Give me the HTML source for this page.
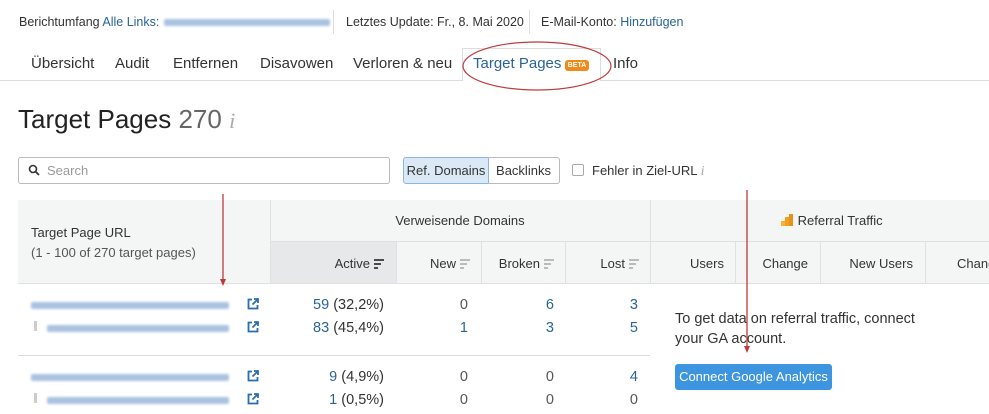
<!DOCTYPE html>
<html><head><meta charset="utf-8"><style>
*{box-sizing:border-box;margin:0;padding:0}
body{width:989px;height:414px;overflow:hidden;background:#fff;font-family:"Liberation Sans",sans-serif;color:#333;position:relative}
.a{position:absolute;white-space:nowrap}
.blue{color:#2a6496}
.blur{position:absolute;height:7px;background:#a9c2e0;border-radius:2px;filter:blur(1.2px)}
.vl{position:absolute;width:1px;background:#e0e0e0}
.num{position:absolute;font-size:14.5px;text-align:right}
.sort{display:inline-block;width:10px;height:10px;vertical-align:-1px;margin-left:4px;background:linear-gradient(#bbb,#bbb) 0 0/10px 2px no-repeat,linear-gradient(#bbb,#bbb) 0 4px/7px 2px no-repeat,linear-gradient(#bbb,#bbb) 0 8px/4px 2px no-repeat}
.ext{position:absolute}
</style></head><body>
<div class="a" style="left:19px;top:15px;font-size:12.5px">Berichtumfang <span class="blue">Alle Links:</span></div>
<div class="blur" style="left:164px;top:19px;width:166px"></div>
<div class="a" style="left:333px;top:10px;width:1px;height:24px;background:#ddd"></div>
<div class="a" style="left:346px;top:15px;font-size:12.5px">Letztes Update: Fr., 8. Mai 2020</div>
<div class="a" style="left:529px;top:10px;width:1px;height:24px;background:#ddd"></div>
<div class="a" style="left:541px;top:15px;font-size:12.5px">E-Mail-Konto: <span class="blue">Hinzufügen</span></div>

<div class="a" style="left:0;top:80px;width:989px;height:1px;background:#ddd"></div>
<div class="a" style="left:462px;top:48px;width:139px;height:33px;border:1px solid #ddd;border-bottom:none;background:#fff"></div>
<div class="a" style="left:31px;top:55px;font-size:15px">Übersicht</div>
<div class="a" style="left:115px;top:55px;font-size:15px">Audit</div>
<div class="a" style="left:173px;top:55px;font-size:15px">Entfernen</div>
<div class="a" style="left:260px;top:55px;font-size:15px">Disavowen</div>
<div class="a" style="left:353px;top:55px;font-size:15px">Verloren &amp; neu</div>
<div class="a" style="left:473px;top:55px;font-size:15px;color:#2a6496">Target Pages</div>
<div class="a" style="left:565px;top:60px;width:24px;height:11px;background:#f08a1a;border-radius:3px;color:#fff;font-size:7px;text-align:center;line-height:11px;font-weight:bold">BETA</div>
<div class="a" style="left:613px;top:55px;font-size:15px">Info</div>

<div class="a" style="left:18px;top:104px;font-size:26px;color:#222">Target Pages <span style="color:#666">270</span> <span style="color:#aaa;font-style:italic;font-family:'Liberation Serif',serif;font-size:22px">i</span></div>

<div class="a" style="left:18px;top:157px;width:372px;height:27px;border:1px solid #bbb;border-radius:3px"></div>
<svg class="a" style="left:28px;top:164px" width="12" height="12" viewBox="0 0 12 12"><circle cx="5" cy="5" r="3.5" fill="none" stroke="#333" stroke-width="1.6"/><path d="M7.5 7.5L11 11" stroke="#333" stroke-width="1.8"/></svg>
<div class="a" style="left:47px;top:163px;font-size:13px;color:#999">Search</div>
<div class="a" style="left:403px;top:157px;width:86px;height:27px;border:1px solid #8ab6e0;background:#dbe9f6;border-radius:3px 0 0 3px;font-size:13px;text-align:center;line-height:25px">Ref. Domains</div>
<div class="a" style="left:488px;top:157px;width:72px;height:27px;border:1px solid #bbb;border-left:none;border-radius:0 3px 3px 0;font-size:13px;text-align:center;line-height:25px">Backlinks</div>
<div class="a" style="left:572px;top:164px;width:12px;height:12px;border:1px solid #aaa;border-radius:2px"></div>
<div class="a" style="left:592px;top:163px;font-size:13px">Fehler in Ziel-URL <span style="color:#aaa;font-style:italic;font-family:'Liberation Serif',serif;font-size:14px">i</span></div>

<div class="a" style="left:18px;top:200px;width:971px;height:83px;background:#f4f5f5"></div>
<div class="a" style="left:270px;top:241px;width:126px;height:42px;background:#e6e8e9"></div>
<div class="vl" style="left:270px;top:200px;height:83px"></div>
<div class="vl" style="left:650px;top:200px;height:83px"></div>
<div class="a" style="left:270px;top:241px;width:719px;height:1px;background:#e0e0e0"></div>
<div class="vl" style="left:396px;top:241px;height:42px"></div>
<div class="vl" style="left:481px;top:241px;height:42px"></div>
<div class="vl" style="left:565px;top:241px;height:42px"></div>
<div class="vl" style="left:735px;top:241px;height:42px"></div>
<div class="vl" style="left:820px;top:241px;height:42px"></div>
<div class="vl" style="left:925px;top:241px;height:42px"></div>
<div class="a" style="left:18px;top:283px;width:971px;height:1px;background:#e0e0e0"></div>
<div class="a" style="left:31px;top:225px;font-size:13px">Target Page URL</div>
<div class="a" style="left:31px;top:245px;font-size:13px;color:#555">(1 - 100 of 270 target pages)</div>
<div class="a" style="left:270px;width:380px;top:213px;font-size:13px;text-align:center">Verweisende Domains</div>
<div class="a" style="left:781px;top:213px;font-size:13px"><svg width="13" height="12" style="vertical-align:-1px"><rect x="0" y="7" width="4" height="5" fill="#f5b431"/><rect x="4" y="3" width="4" height="9" fill="#f0a020"/><rect x="8" y="0" width="4" height="12" fill="#e8901a"/></svg> Referral Traffic</div>
<div class="a" style="left:270px;width:114px;top:256px;font-size:13px;text-align:right">Active<span class="sort" style="filter:brightness(.4)"></span></div>
<div class="a" style="left:396px;width:74px;top:256px;font-size:13px;text-align:right">New<span class="sort"></span></div>
<div class="a" style="left:481px;width:73px;top:256px;font-size:13px;text-align:right">Broken<span class="sort"></span></div>
<div class="a" style="left:565px;width:74px;top:256px;font-size:13px;text-align:right">Lost<span class="sort"></span></div>
<div class="a" style="left:650px;width:74px;top:256px;font-size:13px;text-align:right">Users</div>
<div class="a" style="left:735px;width:73px;top:256px;font-size:13px;text-align:right">Change</div>
<div class="a" style="left:820px;width:93px;top:256px;font-size:13px;text-align:right">New Users</div>
<div class="a" style="left:957px;top:256px;font-size:13px">Chang</div>

<div class="blur" style="left:31px;top:302px;width:198px"></div>
<div class="a" style="left:34px;top:321px;width:3px;height:10px;background:#ccc"></div>
<div class="blur" style="left:47px;top:325px;width:182px"></div>
<div class="blur" style="left:31px;top:374px;width:198px"></div>
<div class="a" style="left:34px;top:393px;width:3px;height:10px;background:#ccc"></div>
<div class="blur" style="left:47px;top:397px;width:182px"></div>
<svg class="ext" style="left:247px;top:298px" width="12" height="12" viewBox="0 0 12 12"><path d="M5 1.5H1.5V10.5H10.5V7" fill="none" stroke="#2a6db0" stroke-width="1.8"/><path d="M7 1H11V5M11 1L5.5 6.5" fill="none" stroke="#2a6db0" stroke-width="1.8"/></svg>
<svg class="ext" style="left:247px;top:321px" width="12" height="12" viewBox="0 0 12 12"><path d="M5 1.5H1.5V10.5H10.5V7" fill="none" stroke="#2a6db0" stroke-width="1.8"/><path d="M7 1H11V5M11 1L5.5 6.5" fill="none" stroke="#2a6db0" stroke-width="1.8"/></svg>
<svg class="ext" style="left:247px;top:370px" width="12" height="12" viewBox="0 0 12 12"><path d="M5 1.5H1.5V10.5H10.5V7" fill="none" stroke="#2a6db0" stroke-width="1.8"/><path d="M7 1H11V5M11 1L5.5 6.5" fill="none" stroke="#2a6db0" stroke-width="1.8"/></svg>
<svg class="ext" style="left:247px;top:393px" width="12" height="12" viewBox="0 0 12 12"><path d="M5 1.5H1.5V10.5H10.5V7" fill="none" stroke="#2a6db0" stroke-width="1.8"/><path d="M7 1H11V5M11 1L5.5 6.5" fill="none" stroke="#2a6db0" stroke-width="1.8"/></svg>
<div class="a" style="left:18px;top:355px;width:632px;height:1px;background:#ddd"></div>

<div class="num" style="left:270px;width:114px;top:297px"><span class="blue">59</span> (32,2%)</div>
<div class="num" style="left:270px;width:114px;top:320px"><span class="blue">83</span> (45,4%)</div>
<div class="num" style="left:270px;width:114px;top:369px"><span class="blue">9</span> (4,9%)</div>
<div class="num" style="left:270px;width:114px;top:392px"><span class="blue">1</span> (0,5%)</div>
<div class="num" style="left:396px;width:72px;top:297px;color:#555">0</div>
<div class="num blue" style="left:396px;width:72px;top:320px">1</div>
<div class="num" style="left:396px;width:72px;top:369px;color:#555">0</div>
<div class="num" style="left:396px;width:72px;top:392px;color:#555">0</div>
<div class="num blue" style="left:481px;width:73px;top:297px">6</div>
<div class="num blue" style="left:481px;width:73px;top:320px">3</div>
<div class="num" style="left:481px;width:73px;top:369px;color:#555">0</div>
<div class="num" style="left:481px;width:73px;top:392px;color:#555">0</div>
<div class="num blue" style="left:565px;width:73px;top:297px">3</div>
<div class="num blue" style="left:565px;width:73px;top:320px">5</div>
<div class="num blue" style="left:565px;width:73px;top:369px">4</div>
<div class="num" style="left:565px;width:73px;top:392px;color:#555">0</div>

<div class="a" style="left:675px;top:309px;font-size:14.5px;line-height:20px;color:#333">To get data on referral traffic, connect<br>your GA account.</div>
<div class="a" style="left:675px;top:364px;width:157px;height:26px;background:#3d95e0;border-radius:3px;color:#fff;font-size:13px;text-align:center;line-height:26px">Connect Google Analytics</div>

<svg class="a" style="left:0;top:0" width="989" height="414">
<ellipse cx="537" cy="66" rx="74" ry="24" fill="none" stroke="#c0393b" stroke-width="1.2"/>
<path d="M223 194V284" stroke="#c0393b" stroke-width="1.3"/><path d="M220 279L223 286L226 279Z" fill="#c0393b"/>
<path d="M747 190V350" stroke="#c0393b" stroke-width="1.3"/><path d="M744 346L747 353L750 346Z" fill="#c0393b"/>
</svg>
</body></html>
